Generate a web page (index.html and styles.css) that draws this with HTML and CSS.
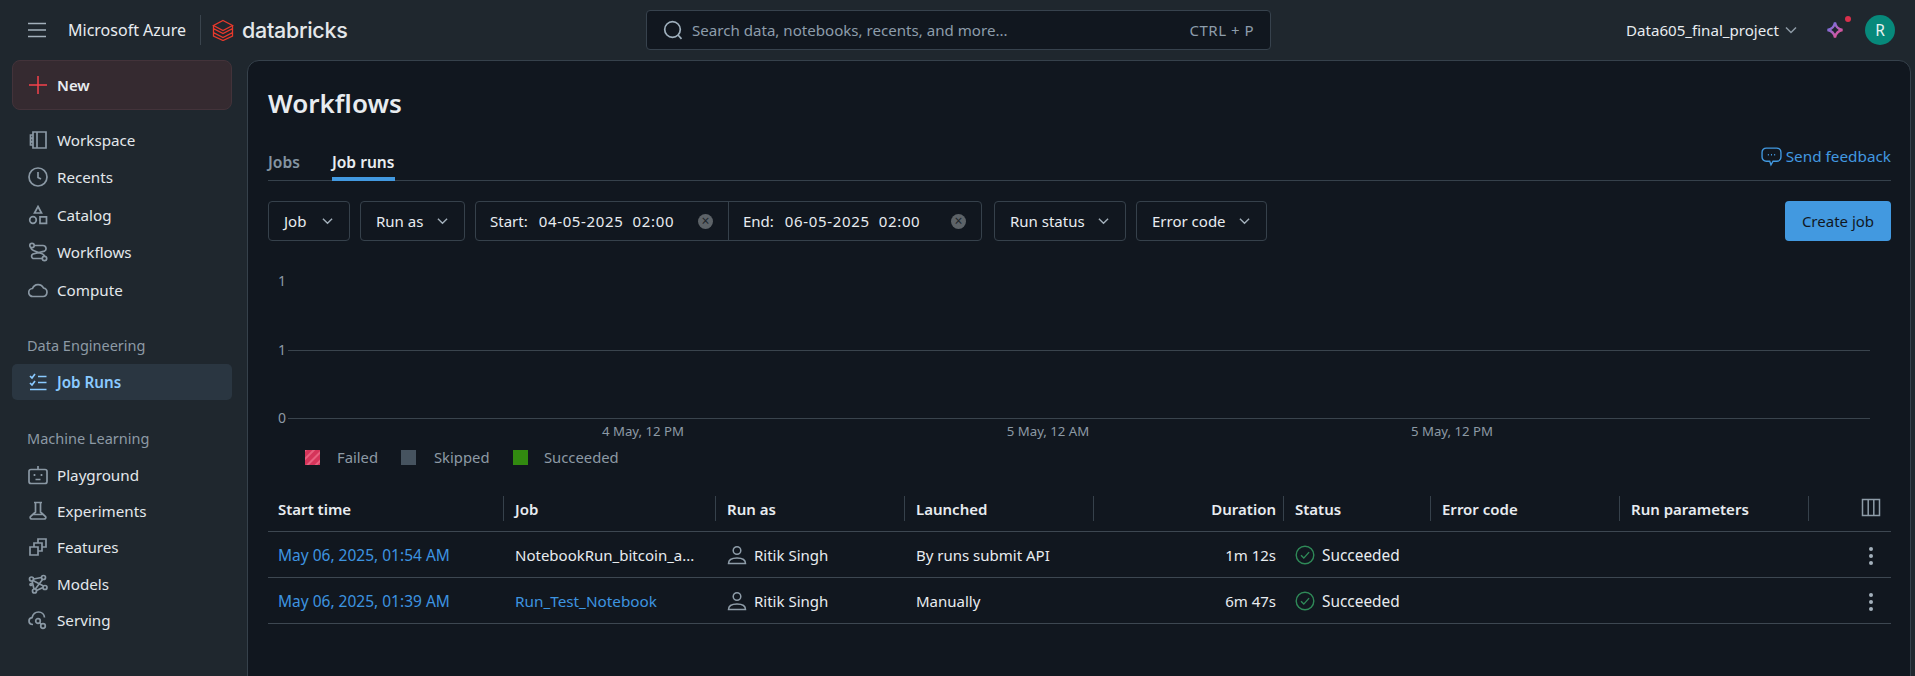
FILE: index.html
```html
<!DOCTYPE html>
<html>

<head>
    <title>Workflows</title>
    <link rel="stylesheet" href="styles.css">
</head>

<body>
    <header class="topbar">
        <div class="brand">
            <svg class="burger" width="20" height="16" viewBox="0 0 20 16"><path d="M1 1.500h18M1 8h18M1 14.500h18" stroke="#a3b0bb" stroke-width="1.600" fill="none"/></svg>
            <span class="azure">Microsoft Azure</span>
            <span class="brand-sep"></span>
            <svg class="logo" width="22" height="22" viewBox="0 0 22 22" fill="none" stroke="#e8392c" stroke-width="1.300"><path d="M11 1.500 20.500 6.500 11 11.500 1.500 6.500z"/><path d="M1.500 6.500v3l9.500 5 9.500-5v-3M1.500 10v3.500l9.500 5 9.500-5V10M1.500 14v3l9.500 4.500 9.500-4.500v-3"/></svg>
            <span class="wordmark">databricks</span>
        </div>
        <div class="search">
            <svg width="20" height="20" viewBox="0 0 20 20" fill="none" stroke="#9fb0bd" stroke-width="1.700"><circle cx="9.500" cy="9.500" r="7.800"/><path d="M15 15l3.500 3.800"/></svg>
            <span class="search-text">Search data, notebooks, recents, and more...</span>
            <span class="search-key">CTRL + P</span>
        </div>
        <div class="account">
            <span class="workspace-name">Data605_final_project</span>
            <svg width="12" height="8" viewBox="0 0 12 8" fill="none" stroke="#8d9aa5" stroke-width="1.500"><path d="M1 1.500l5 5 5-5"/></svg>
            <span class="assistant">
                <svg width="18" height="18" viewBox="0 0 18 18" fill="none" stroke-width="2.300"><defs><linearGradient id="spark" x1="0" y1="0" x2="1" y2="1"><stop offset="0" stop-color="#5a78f5"/><stop offset="1" stop-color="#ff4a80"/></linearGradient></defs><path d="M9 1.500C9.800 6 12 8.200 16.500 9 12 9.800 9.800 12 9 16.500 8.200 12 6 9.800 1.500 9 6 8.200 8.200 6 9 1.500z" stroke="url(#spark)"/></svg>
                <span class="assistant-dot"></span>
            </span>
            <span class="avatar">R</span>
        </div>
    </header>

    <div class="layout">
        <nav class="sidebar">
            <div class="new-btn">
                <svg width="18" height="18" viewBox="0 0 18 18"><path d="M9 0v18M0 9h18" stroke="#f5424b" stroke-width="1.500"/></svg>
                <span>New</span>
            </div>

            <div class="nav-group">
                <a class="nav-item">
                    <svg class="nav-icon" viewBox="0 0 20 20"><path d="M5 2h13v16H5zM9 2v16M2.500 5H5v3H2.500zM2.500 8.500H5v3H2.500zM2.500 12H5v3H2.500z"/></svg>
                    Workspace
                </a>
                <a class="nav-item">
                    <svg class="nav-icon" viewBox="0 0 20 20"><circle cx="10" cy="10" r="9"/><path d="M10 5v5.500l3 1.500"/></svg>
                    Recents
                </a>
                <a class="nav-item">
                    <svg class="nav-icon" viewBox="0 0 20 20"><path d="M10 1.500 13.500 8h-7z"/><circle cx="5" cy="15" r="3.300"/><path d="M12 11.800h6.500v6.500H12z"/></svg>
                    Catalog
                </a>
                <a class="nav-item">
                    <svg class="nav-icon" viewBox="0 0 20 20"><circle cx="4" cy="3.500" r="2.200"/><circle cx="16.500" cy="16.500" r="2.200"/><path d="M6.200 3.500H15a3 3 0 0 1 1.500 5.600L5 12a2.500 2.500 0 0 0 0 4.500h9.300M3 5.500C3 7.500 5 8.500 8 9.500l4 1.500c2.500.8 4.500 1.500 4.500 3.300"/></svg>
                    Workflows
                </a>
                <a class="nav-item">
                    <svg class="nav-icon" viewBox="0 0 20 20"><path d="M5 16.500a4 4 0 0 1-.5-8A6 6 0 0 1 15.500 8 4.300 4.300 0 0 1 15 16.500z"/></svg>
                    Compute
                </a>
            </div>

            <div class="nav-title nav-title-data">Data Engineering</div>
            <a class="nav-item nav-active">
                <svg class="nav-icon" viewBox="0 0 20 20"><path d="M2 4l2 2 3-4M2 11l2 2 3-4M10 4.500h8.500M10 10.500h8.500M2 17.500h16.500"/></svg>
                Job Runs
            </a>

            <div class="nav-title nav-title-ml">Machine Learning</div>
            <div class="nav-group-ml">
                <a class="nav-item">
                    <svg class="nav-icon" viewBox="0 0 20 20"><rect x="1" y="4.500" width="18" height="14" rx="2"/><path d="M10 4.500V1"/><path d="M6.500 9v2M13.500 9v2M7.500 14.500h5"/></svg>
                    Playground
                </a>
                <a class="nav-item">
                    <svg class="nav-icon" viewBox="0 0 20 20"><path d="M6 1.500h8M7.500 1.500V11L2.500 15.500c-.8 1.200 0 2.500 1.500 2.500h12c1.500 0 2.300-1.300 1.500-2.500L12.500 11V1.500M4 13.500h12"/></svg>
                    Experiments
                </a>
                <a class="nav-item">
                    <svg class="nav-icon" viewBox="0 0 20 20"><path d="M2 10h8v8H2zM6 10V6h8v8h-4M10 6V2h8v8h-4"/></svg>
                    Features
                </a>
                <a class="nav-item">
                    <svg class="nav-icon" viewBox="0 0 20 20"><circle cx="3.500" cy="5" r="2"/><circle cx="15.500" cy="3.500" r="2"/><circle cx="6.500" cy="17" r="2"/><circle cx="17" cy="13.500" r="2"/><circle cx="3" cy="10.500" r="1"/><path d="M5.500 5l8-1.500M5 6.500l10.500 5.500M14.500 5.500 7 15.500M8.500 16.500l6.500-3M4 7l2 8"/></svg>
                    Models
                </a>
                <a class="nav-item">
                    <svg class="nav-icon" viewBox="0 0 20 20"><path d="M5 14.500C2.500 14.500 1 12.800 1 11c0-1.800 1.300-3 3-3.300C5 4 7.500 2 10.500 2c3.300 0 5.800 2.500 6 5.500"/><circle cx="10" cy="11" r="2.300"/><circle cx="15" cy="16" r="2.300"/><path d="M11.800 12.800l1.500 1.500"/></svg>
                    Serving
                </a>
            </div>
        </nav>

        <main class="panel">
            <h1>Workflows</h1>

            <div class="tabs">
                <span class="tab">Jobs</span>
                <span class="tab tab-active">Job runs</span>
                <a class="feedback">
                    <svg width="21" height="21" viewBox="0 0 20 20" fill="none" stroke="#4299e0" stroke-width="1.300"><path d="M5 2h10a4 4 0 0 1 4 4v4.500a4 4 0 0 1-4 4h-3.500L9.500 18l-1.200-3.500H5a4 4 0 0 1-4-4V6a4 4 0 0 1 4-4z"/><path d="M6.500 8.300h1M9.500 8.300h1M12.500 8.300h1" stroke-width="1.500"/></svg>
                    Send feedback
                </a>
            </div>

            <div class="filters">
                <div class="filter f-job">Job <svg class="chev" viewBox="0 0 12 8"><path d="M1 1.500l5 5 5-5"/></svg></div>
                <div class="filter f-runas">Run as <svg class="chev" viewBox="0 0 12 8"><path d="M1 1.500l5 5 5-5"/></svg></div>
                <div class="daterange">
                    <div class="date-part date-start">
                        <span class="date-label">Start:</span>
                        <span class="date-value">04-05-2025&nbsp; 02:00</span>
                        <span class="clear">×</span>
                    </div>
                    <div class="date-part date-end">
                        <span class="date-label">End:</span>
                        <span class="date-value">06-05-2025&nbsp; 02:00</span>
                        <span class="clear">×</span>
                    </div>
                </div>
                <div class="filter f-status">Run status <svg class="chev" viewBox="0 0 12 8"><path d="M1 1.500l5 5 5-5"/></svg></div>
                <div class="filter f-error">Error code <svg class="chev" viewBox="0 0 12 8"><path d="M1 1.500l5 5 5-5"/></svg></div>
                <button class="create-btn">Create job</button>
            </div>

            <svg class="chart" width="1623" height="225" viewBox="0 0 1623 225">
                <defs>
                    <pattern id="hatch" width="6" height="6" patternUnits="userSpaceOnUse" patternTransform="rotate(45)">
                        <rect width="6" height="6" fill="#d5345a"/>
                        <rect width="2" height="6" fill="#e8607f"/>
                    </pattern>
                </defs>
                <g class="axis-y">
                    <text x="19" y="45">1</text>
                    <text x="19" y="114">1</text>
                    <text x="19" y="182">0</text>
                </g>
                <path d="M21 109.500H1603M21 177.500H1603" stroke="#3a444d"/>
                <g class="axis-x">
                    <text x="376" y="195">4 May, 12 PM</text>
                    <text x="781" y="195">5 May, 12 AM</text>
                    <text x="1185" y="195">5 May, 12 PM</text>
                </g>
                <g class="legend">
                    <rect x="38" y="209" width="15" height="15" fill="url(#hatch)"/>
                    <text x="70" y="222">Failed</text>
                    <rect x="134" y="209" width="15" height="15" fill="#46535f"/>
                    <text x="167" y="222">Skipped</text>
                    <rect x="246" y="209" width="15" height="15" fill="#328a10"/>
                    <text x="277" y="222">Succeeded</text>
                </g>
            </svg>

            <table class="runs">
                <thead>
                    <tr>
                        <th class="c-start">Start time</th>
                        <th class="c-job">Job</th>
                        <th class="c-runas">Run as</th>
                        <th class="c-launched">Launched</th>
                        <th class="c-duration">Duration</th>
                        <th class="c-status">Status</th>
                        <th class="c-error">Error code</th>
                        <th class="c-params">Run parameters</th>
                        <th class="c-actions">
                            <svg width="20" height="19" viewBox="0 0 19 19" fill="none" stroke="#8e9ca8" stroke-width="1.500"><path d="M1 1.500h17v16H1zM6.700 1.500v16M12.300 1.500v16"/></svg>
                        </th>
                    </tr>
                </thead>
                <tbody>
                    <tr>
                        <td><a class="link link-date">May 06, 2025, 01:54 AM</a></td>
                        <td>NotebookRun_bitcoin_a...</td>
                        <td><div class="user"><svg class="user-icon" viewBox="0 0 20 20"><circle cx="10" cy="5.500" r="3.800"/><path d="M1.500 18.500c0-4 3.500-5.500 8.500-5.500s8.500 1.500 8.500 5.500z"/></svg>Ritik Singh</div></td>
                        <td>By runs submit API</td>
                        <td class="num">1m 12s</td>
                        <td><div class="status"><svg class="ok-icon" viewBox="0 0 20 20"><circle cx="10" cy="10" r="8.800"/><path d="M6 10.300l2.800 2.800 5.300-6"/></svg>Succeeded</div></td>
                        <td></td>
                        <td></td>
                        <td class="c-actions"><span class="kebab"><i></i><i></i><i></i></span></td>
                    </tr>
                    <tr>
                        <td><a class="link link-date">May 06, 2025, 01:39 AM</a></td>
                        <td><a class="link">Run_Test_Notebook</a></td>
                        <td><div class="user"><svg class="user-icon" viewBox="0 0 20 20"><circle cx="10" cy="5.500" r="3.800"/><path d="M1.500 18.500c0-4 3.500-5.500 8.500-5.500s8.500 1.500 8.500 5.500z"/></svg>Ritik Singh</div></td>
                        <td>Manually</td>
                        <td class="num">6m 47s</td>
                        <td><div class="status"><svg class="ok-icon" viewBox="0 0 20 20"><circle cx="10" cy="10" r="8.800"/><path d="M6 10.300l2.800 2.800 5.300-6"/></svg>Succeeded</div></td>
                        <td></td>
                        <td></td>
                        <td class="c-actions"><span class="kebab"><i></i><i></i><i></i></span></td>
                    </tr>
                </tbody>
            </table>
        </main>
    </div>
</body>

</html>
```

FILE: styles.css
```css
* {
    box-sizing: border-box;
}

html, body {
    margin: 0;
    height: 676px;
    overflow: hidden;
}

body {
    background-color: #1f272e;
    color: #e8ecf0;
    font-family: "Noto Sans", "Open Sans", sans-serif;
    font-size: 15px;
}

/* top bar */
.topbar {
    height: 60px;
    display: grid;
    grid-template-columns: 646px 625px 1fr;
    align-items: center;
}

.brand {
    display: flex;
    align-items: center;
    padding-left: 27px;
}

.burger {
    margin-right: 21px;
}

.azure {
    font-size: 16px;
    width: 122px;
    white-space: nowrap;
}

.brand-sep {
    width: 1px;
    height: 30px;
    background-color: #3a444d;
    margin: 0 11px 0 10px;
}

.wordmark {
    font-family: Inter, sans-serif;
    font-size: 21.500px;
    font-weight: 500;
    color: #e4e7ea;
    margin-left: 8px;
    letter-spacing: -0.3px;
}

.search {
    height: 40px;
    display: flex;
    align-items: center;
    padding: 0 16px;
    background-color: #11171f;
    border: 1px solid #37424d;
    border-radius: 4px;
    color: #8d9dab;
}

.search-text {
    margin-left: 9px;
    flex: 1;
    font-size: 15.100px;
}

.search-key {
    font-size: 15px;
    letter-spacing: 0.5px;
}

.account {
    display: flex;
    align-items: center;
    padding-left: 355px;
}

.workspace-name {
    width: 159px;
    white-space: nowrap;
    font-size: 15.100px;
}

.assistant {
    position: relative;
    display: flex;
    margin-left: 29px;
}

.assistant-dot {
    position: absolute;
    top: -5px;
    right: -7px;
    width: 6px;
    height: 6px;
    border-radius: 50%;
    background-color: #d8304c;
}

.avatar {
    width: 30px;
    height: 30px;
    margin-left: 21px;
    border-radius: 50%;
    background-color: #07897b;
    color: #e8f2f0;
    font-size: 15.500px;
    display: flex;
    align-items: center;
    justify-content: center;
}

/* sidebar */
.layout {
    display: flex;
    height: 616px;
}

.sidebar {
    width: 247px;
    flex-shrink: 0;
    padding: 0 15px 0 12px;
}

.new-btn {
    height: 50px;
    display: flex;
    align-items: center;
    gap: 10px;
    padding-left: 16px;
    background-color: #352a30;
    border: 1px solid #43333a;
    border-radius: 8px;
    font-weight: 600;
}

.nav-group {
    margin-top: 11px;
}

.nav-group .nav-item {
    height: 37.500px;
}

.nav-group-ml .nav-item {
    height: 36.300px;
}

.nav-item {
    display: flex;
    align-items: center;
    gap: 9px;
    height: 36px;
    padding-left: 16px;
    color: #e3e8ec;
    font-size: 15.200px;
}

.nav-icon {
    width: 20px;
    height: 20px;
    flex-shrink: 0;
    fill: none;
    stroke: #8a98a4;
    stroke-width: 1.700;
}

.nav-title {
    padding-left: 15px;
    color: #8d9aa5;
    font-size: 14.500px;
    line-height: 20px;
}

.nav-title-data {
    margin-top: 26px;
    margin-bottom: 9px;
}

.nav-title-ml {
    margin-top: 28px;
    margin-bottom: 9px;
}

.nav-active {
    background-color: #2a3641;
    border-radius: 5px;
    color: #8acaff;
    font-weight: 600;
}

.nav-active .nav-icon {
    stroke: #8acaff;
}

/* main panel */
.panel {
    width: 1664px;
    height: 640px;
    padding: 0 19px 0 20px;
    background-color: #11171f;
    border: 1px solid #36414b;
    border-radius: 12px;
}

h1 {
    margin: 23px 0 0;
    font-size: 26px;
    font-weight: 600;
    line-height: 38px;
}

.tabs {
    display: flex;
    align-items: flex-end;
    height: 39px;
    margin-top: 20px;
    border-bottom: 1px solid #36414b;
}

.tab {
    height: 39px;
    margin-right: 32px;
    padding-top: 9px;
    color: #8494a2;
    font-size: 15.600px;
    font-weight: 600;
    margin-bottom: -1px;
}

.tab-active {
    color: #e8ecf0;
    border-bottom: 4px solid #4299e0;
}

.feedback {
    display: flex;
    align-items: center;
    gap: 4px;
    margin-left: auto;
    height: 39px;
    padding-bottom: 9px;
    color: #4299e0;
    font-size: 15.300px;
}

.filters {
    display: flex;
    align-items: center;
    gap: 10px;
    margin-top: 20px;
}

.filter {
    height: 40px;
    display: flex;
    align-items: center;
    justify-content: space-between;
    padding: 0 16px 0 15px;
    border: 1px solid #36414b;
    border-radius: 4px;
    font-size: 15px;
}

.f-job { width: 82px; }
.f-runas { width: 105px; }
.f-status { width: 132px; margin-left: 2px; }
.f-error { width: 131px; }

.chev {
    width: 11px;
    height: 8px;
    fill: none;
    stroke: #a3b0bb;
    stroke-width: 1.500;
}

.daterange {
    display: flex;
    width: 507px;
    height: 40px;
    border: 1px solid #36414b;
    border-radius: 4px;
}

.date-part {
    display: flex;
    align-items: center;
    padding-left: 14px;
    font-size: 15px;
}

.date-start {
    width: 253px;
    border-right: 1px solid #36414b;
}

.date-end {
    flex: 1;
}

.date-value {
    margin-left: 11px;
    letter-spacing: 0.65px;
    white-space: nowrap;
}

.clear {
    width: 15px;
    height: 15px;
    margin-left: auto;
    margin-right: 15px;
    border-radius: 50%;
    background-color: #5d6368;
    color: #20262c;
    font-size: 14px;
    line-height: 14px;
    text-align: center;
}

.create-btn {
    width: 106px;
    height: 40px;
    margin-left: auto;
    background-color: #4299e0;
    color: #11171f;
    border: none;
    border-radius: 4px;
    font-family: inherit;
    font-size: 15px;
}

/* chart */
.chart {
    display: block;
    margin-left: -1px;
    font-family: inherit;
}

.axis-y text {
    fill: #8d9aa5;
    font-size: 14px;
    text-anchor: end;
}

.axis-x text {
    fill: #8d9aa5;
    font-size: 13.200px;
    text-anchor: middle;
}

.legend text {
    fill: #8d9aa5;
    font-size: 14.800px;
}

/* table */
.runs {
    width: 1623px;
    margin-top: 14px;
    border-collapse: collapse;
    table-layout: fixed;
    font-size: 15px;
}

.runs th {
    position: relative;
    height: 51px;
    padding: 8px 0 0 11px;
    text-align: left;
    font-weight: 600;
    border-bottom: 1px solid #3d4751;
    white-space: nowrap;
}

.runs th:first-child,
.runs td:first-child {
    padding-left: 10px;
}

.runs th::after {
    content: "";
    position: absolute;
    right: 0;
    top: 16px;
    height: 25px;
    width: 1px;
    background-color: #36414b;
}

.runs th:last-child::after {
    display: none;
}

.runs td {
    height: 46px;
    padding: 2px 0 0 11px;
    border-bottom: 1px solid #3d4751;
    white-space: nowrap;
}

.c-start { width: 236px; }
.c-job { width: 212px; }
.c-runas { width: 189px; }
.c-launched { width: 189px; }
.c-duration { width: 190px; }
.c-status { width: 147px; }
.c-error { width: 189px; }
.c-params { width: 189px; }
.c-actions { width: 82px; }

.runs .c-duration,
.runs .num {
    padding-right: 8px;
    text-align: right;
}

.runs .c-actions {
    padding-left: 0;
    padding-right: 10px;
    text-align: right;
}

.link {
    color: #3d94e0;
    font-size: 15.300px;
}

.link-date {
    font-size: 15.500px;
}

.user,
.status {
    display: flex;
    align-items: center;
    gap: 7px;
}

.status {
    font-size: 15.400px;
}

.user-icon {
    width: 20px;
    height: 20px;
    fill: none;
    stroke: #8e9ca8;
    stroke-width: 1.500;
}

.ok-icon {
    width: 20px;
    height: 20px;
    fill: none;
    stroke: #2f8a58;
    stroke-width: 1.400;
}

.kebab {
    display: inline-flex;
    flex-direction: column;
    gap: 3px;
    margin-right: 8px;
    vertical-align: middle;
}

.kebab i {
    display: block;
    width: 4px;
    height: 4px;
    border-radius: 50%;
    background-color: #a3b0bb;
}
```
